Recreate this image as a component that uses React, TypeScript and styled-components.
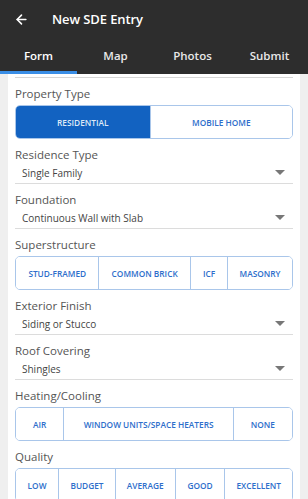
import styled, { createGlobalStyle } from 'styled-components'
import { ArrowLeft } from 'lucide-react'

const GlobalStyle = createGlobalStyle`
  html, body {
    margin: 0;
    padding: 0;
    background: #efefef;
  }
  body {
    font-family: 'Open Sans', 'Noto Sans', 'Liberation Sans', sans-serif;
  }
  * {
    box-sizing: border-box;
  }
`

const Header = styled.header`
  background: #2d2d2d;
  color: #fff;
`

const AppBar = styled.div`
  height: 38px;
  display: flex;
  align-items: center;
  padding-left: 14px;
  gap: 23px;
`

const Title = styled.h1`
  margin: 0;
  font-size: 13px;
  font-weight: 600;
  letter-spacing: -0.1px;
`

const Tabs = styled.nav`
  display: grid;
  grid-template-columns: repeat(4, 1fr);
  height: 36px;
`

const Tab = styled.div<{ $active?: boolean }>`
  display: flex;
  align-items: center;
  justify-content: center;
  font-size: 11.5px;
  font-weight: 600;
  color: ${({ $active }) => ($active ? '#fff' : '#e8e8e8')};
  border-bottom: 3px solid ${({ $active }) => ($active ? '#3a8ee6' : 'transparent')};
  padding-top: 1px;
`

const Card = styled.main`
  margin: 0 8px;
  background: #fff;
  padding: 0 7px 20px;
`

const TopRule = styled.div`
  height: 4px;
  border-bottom: 1px solid #d6d6d6;
`

const Field = styled.section`
  margin-top: 8px;
`

const Label = styled.div`
  font-size: 11.5px;
  line-height: 16px;
  color: #555;
`

const SelectRow = styled.div`
  height: 21px;
  display: flex;
  align-items: center;
  justify-content: space-between;
  padding: 0 8px 1px 7px;
  border-bottom: 1.5px solid #dcdcdc;
  font-size: 10px;
  color: #444;
`

const Caret = styled.span`
  width: 0;
  height: 0;
  border-left: 5px solid transparent;
  border-right: 5px solid transparent;
  border-top: 5px solid #777;
`

const Segments = styled.div`
  margin-top: 3px;
  height: 34px;
  display: flex;
  border: 1px solid #a9c6ea;
  border-radius: 5px;
  overflow: hidden;
`

const Segment = styled.div<{ $w: number; $on?: boolean }>`
  flex: ${({ $w }) => `${$w} ${$w} 0`};
  display: flex;
  align-items: center;
  justify-content: center;
  font-size: 8.3px;
  font-weight: 600;
  white-space: nowrap;
  color: ${({ $on }) => ($on ? '#dfe9f7' : '#2d6ecb')};
  background: ${({ $on }) => ($on ? '#1262c1' : '#fff')};
  & + & {
    border-left: 1px solid #a9c6ea;
  }
`

type Option = { text: string; w: number; on?: boolean }

const SegmentField = ({ label, options }: { label: string; options: Option[] }) => (
  <Field>
    <Label>{label}</Label>
    <Segments>
      {options.map((o) => (
        <Segment key={o.text} $w={o.w} $on={o.on}>
          {o.text}
        </Segment>
      ))}
    </Segments>
  </Field>
)

const SelectField = ({ label, value }: { label: string; value: string }) => (
  <Field>
    <Label>{label}</Label>
    <SelectRow>
      <span>{value}</span>
      <Caret />
    </SelectRow>
  </Field>
)

export default function App() {
  return (
    <>
      <GlobalStyle />
      <Header>
        <AppBar>
          <ArrowLeft size={15} strokeWidth={2.5} />
          <Title>New SDE Entry</Title>
        </AppBar>
        <Tabs>
          <Tab $active>Form</Tab>
          <Tab>Map</Tab>
          <Tab>Photos</Tab>
          <Tab>Submit</Tab>
        </Tabs>
      </Header>
      <Card>
        <TopRule />
        <SegmentField
          label="Property Type"
          options={[
            { text: 'RESIDENTIAL', w: 135, on: true },
            { text: 'MOBILE HOME', w: 143 },
          ]}
        />
        <SelectField label="Residence Type" value="Single Family" />
        <SelectField label="Foundation" value="Continuous Wall with Slab" />
        <SegmentField
          label="Superstructure"
          options={[
            { text: 'STUD-FRAMED', w: 84 },
            { text: 'COMMON BRICK', w: 92 },
            { text: 'ICF', w: 37 },
            { text: 'MASONRY', w: 65 },
          ]}
        />
        <SelectField label="Exterior Finish" value="Siding or Stucco" />
        <SelectField label="Roof Covering" value="Shingles" />
        <SegmentField
          label="Heating/Cooling"
          options={[
            { text: 'AIR', w: 48 },
            { text: 'WINDOW UNITS/SPACE HEATERS', w: 171 },
            { text: 'NONE', w: 59 },
          ]}
        />
        <SegmentField
          label="Quality"
          options={[
            { text: 'LOW', w: 43 },
            { text: 'BUDGET', w: 57 },
            { text: 'AVERAGE', w: 60 },
            { text: 'GOOD', w: 50 },
            { text: 'EXCELLENT', w: 68 },
          ]}
        />
      </Card>
    </>
  )
}
